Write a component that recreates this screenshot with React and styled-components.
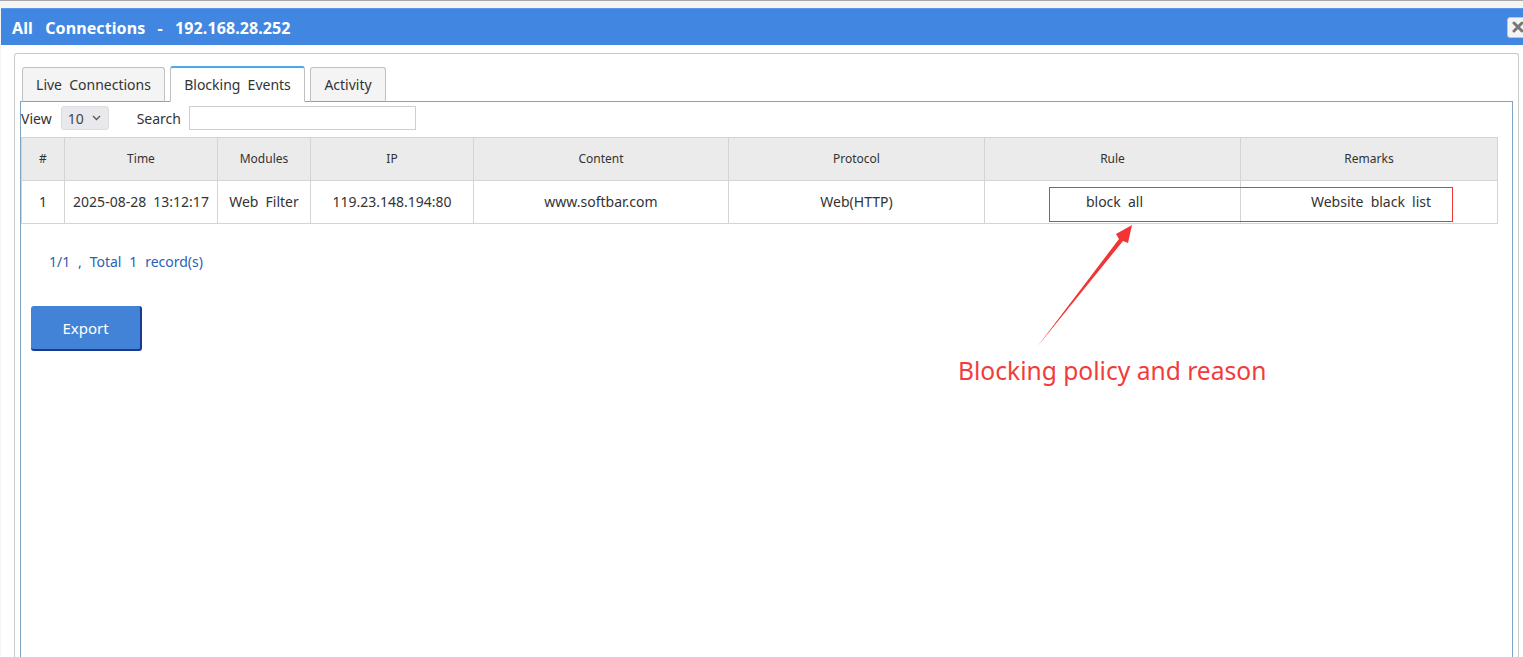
import React from 'react';
import styled, { createGlobalStyle } from 'styled-components';

const GlobalStyle = createGlobalStyle`
  html, body {
    margin: 0;
    padding: 0;
    background: #fff;
    overflow: hidden;
  }
  body {
    font-family: "Noto Sans", "Open Sans", "Liberation Sans", sans-serif;
    color: #333;
    word-spacing: 0.22em;
  }
`;

const Page = styled.div`
  width: 1523px;
  height: 657px;
  border-top: 1px solid #a8a8a8;
  padding-top: 7px;
  background: #f5f5f5;
  box-sizing: border-box;
  display: flex;
  flex-direction: column;
  overflow: hidden;
`;

const Window = styled.div`
  flex: 1;
  margin-left: 1px;
  background: #fff;
  display: flex;
  flex-direction: column;
`;

const TitleBar = styled.div`
  height: 37px;
  background: #4187e2;
  border-top: 1px solid #5b98e8;
  box-sizing: border-box;
  display: flex;
  align-items: center;
  justify-content: space-between;
  padding-left: 11px;
`;

const Title = styled.div`
  color: #fff;
  font-size: 16px;
  font-weight: 700;
  word-spacing: 0.5em;
  letter-spacing: 0.1px;
  margin-top: 1px;
`;

const CloseButton = styled.button`
  width: 22px;
  height: 21px;
  margin-right: -6px;
  padding: 0;
  border: 1px solid #c4c4c4;
  border-radius: 3px;
  background: #f4f4f4;
  display: flex;
  align-items: center;
  justify-content: center;
`;

const Panel = styled.div`
  flex: 1;
  margin: 8px 4px 0 13px;
  border: 1px solid #cacaca;
  border-bottom: none;
  border-radius: 3px 3px 0 0;
  padding: 12px 5px 0 5px;
  display: flex;
  flex-direction: column;
`;

const TabList = styled.div`
  display: flex;
  align-items: flex-end;
  gap: 5px;
  padding-left: 2px;
  height: 36px;
  margin-bottom: -1px;
  position: relative;
  z-index: 1;
`;

const Tab = styled.div`
  width: ${p => p.w}px;
  height: ${p => (p.active ? 36 : 35)}px;
  box-sizing: border-box;
  border: 1px solid #c0c0c0;
  border-top: ${p => (p.active ? '2px solid #4ea6ee' : '1px solid #c0c0c0')};
  border-bottom: ${p => (p.active ? '1px solid #fff' : '1px solid #7ea3c4')};
  border-radius: 3px 3px 0 0;
  background: ${p => (p.active ? '#fff' : '#f4f4f4')};
  font-size: 14px;
  color: #333;
  display: flex;
  align-items: center;
  justify-content: center;
`;

const TabBody = styled.div`
  flex: 1;
  border: 1px solid #7ea3c4;
  border-bottom: none;
  position: relative;
`;

const Toolbar = styled.div`
  display: flex;
  align-items: center;
  height: 24px;
  margin-top: 4px;
  font-size: 14px;
`;

const Label = styled.span`
  margin-right: ${p => p.gap}px;
`;

const Select = styled.div`
  width: 48px;
  height: 24px;
  box-sizing: border-box;
  background: #e9e9ed;
  border: 1px solid #dcdcdc;
  border-radius: 3px;
  display: flex;
  align-items: center;
  justify-content: space-between;
  padding: 0 7px 0 6px;
  font-size: 14px;
  color: #444;
  margin-right: 28px;
`;

const SearchInput = styled.input`
  width: 227px;
  height: 24px;
  box-sizing: border-box;
  border: 1px solid #cfcfcf;
  padding: 0 4px;
  outline: none;
`;

const TableWrap = styled.div`
  margin-top: 7px;
  width: 1476px;
`;

const Table = styled.table`
  border-collapse: collapse;
  table-layout: fixed;
  width: 1476px;
`;

const Th = styled.th`
  height: 43px;
  box-sizing: border-box;
  background: #ebebeb;
  border: 1px solid #d4d4d4;
  font-size: 12px;
  font-weight: 400;
  color: #333;
  padding: 0 0 1px;
`;

const Td = styled.td`
  height: 43px;
  box-sizing: border-box;
  border: 1px solid #d4d4d4;
  font-size: 14px;
  color: #333;
  text-align: center;
  padding: 0 0 1px;
  white-space: nowrap;
`;

const CellText = styled.span`
  position: relative;
  left: ${p => p.shift || 0}px;
`;

const Pager = styled.div`
  margin: 28px 0 0 28px;
  font-size: 14px;
  color: #2c5fb4;
  word-spacing: 0.3em;
`;

const ExportButton = styled.button`
  margin: 35px 0 0 10px;
  width: 111px;
  height: 45px;
  border: none;
  border-right: 2px solid #1b3a8c;
  border-bottom: 2px solid #1b3a8c;
  border-radius: 3px;
  background: #4283d7;
  color: #fff;
  font-family: inherit;
  font-size: 15px;
  display: flex;
  align-items: center;
  justify-content: center;
`;

const Highlight = styled.div`
  position: absolute;
  left: 1028px;
  top: 85px;
  width: 404px;
  height: 35px;
  box-sizing: border-box;
  border: 1.5px solid #f23434;
  pointer-events: none;
`;

const Arrow = styled.svg`
  position: absolute;
  left: 1009px;
  top: 118px;
`;

const Note = styled.div`
  position: absolute;
  left: 937px;
  top: 254px;
  font-size: 24.6px;
  line-height: 30px;
  color: #f23c3c;
  word-spacing: 0;
`;

const columns = [
  { key: 'no', label: '#', width: 43 },
  { key: 'time', label: 'Time', width: 153 },
  { key: 'module', label: 'Modules', width: 93 },
  { key: 'ip', label: 'IP', width: 163 },
  { key: 'content', label: 'Content', width: 255 },
  { key: 'protocol', label: 'Protocol', width: 256 },
  { key: 'rule', label: 'Rule', width: 256 },
  { key: 'remarks', label: 'Remarks', width: 257 },
];

const rows = [
  {
    no: '1',
    time: '2025-08-28 13:12:17',
    module: 'Web Filter',
    ip: '119.23.148.194:80',
    content: 'www.softbar.com',
    protocol: 'Web(HTTP)',
    rule: 'block all',
    remarks: 'Website black list',
  },
];

const shifts = { rule: 2, remarks: 2 };

const App = () => (
  <>
    <GlobalStyle />
    <Page>
      <Window>
        <TitleBar>
          <Title>All Connections - 192.168.28.252</Title>
          <CloseButton aria-label="close">
            <svg width="12" height="12" viewBox="0 0 12 12">
              <path d="M2 2 L10 10 M10 2 L2 10" stroke="#777" strokeWidth="3" strokeLinecap="round" />
            </svg>
          </CloseButton>
        </TitleBar>

        <Panel>
          <TabList>
            <Tab w={143}>Live Connections</Tab>
            <Tab w={135} active>Blocking Events</Tab>
            <Tab w={76}>Activity</Tab>
          </TabList>

          <TabBody>
            <Toolbar>
              <Label gap={9}>View</Label>
              <Select>
                <span>10</span>
                <svg width="9" height="6" viewBox="0 0 9 6">
                  <path d="M1 1 L4.5 4.5 L8 1" fill="none" stroke="#555" strokeWidth="1.3" />
                </svg>
              </Select>
              <Label gap={8}>Search</Label>
              <SearchInput />
            </Toolbar>

            <TableWrap>
              <Table>
                <colgroup>
                  {columns.map(c => <col key={c.key} style={{ width: c.width }} />)}
                </colgroup>
                <thead>
                  <tr>
                    {columns.map(c => <Th key={c.key}>{c.label}</Th>)}
                  </tr>
                </thead>
                <tbody>
                  {rows.map(r => (
                    <tr key={r.no}>
                      {columns.map(c => (
                        <Td key={c.key}>
                          <CellText shift={shifts[c.key]}>{r[c.key]}</CellText>
                        </Td>
                      ))}
                    </tr>
                  ))}
                </tbody>
              </Table>
            </TableWrap>

            <Pager>1/1 , Total 1 record(s)</Pager>
            <ExportButton>Export</ExportButton>

            <Highlight />
            <Arrow width="110" height="135" viewBox="0 0 110 135">
              <polygon points="7,127 89,19 86,14 102,5 98,23 93,21" fill="#f23434" />
            </Arrow>
            <Note>Blocking policy and reason</Note>
          </TabBody>
        </Panel>
      </Window>
    </Page>
  </>
);

export default App;
